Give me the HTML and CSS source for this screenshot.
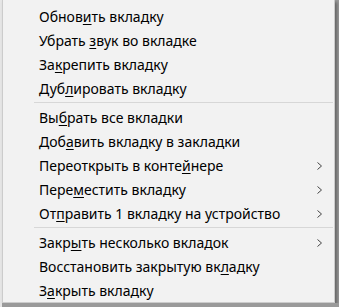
FILE: index.html
```html
<!DOCTYPE html>
<html lang="ru">
<head>
  <meta charset="UTF-8">
  <title>Контекстное меню вкладки</title>
  <link rel="stylesheet" href="styles.css">
</head>
<body>
  <div class="menu">
    <div class="item"><span>Обнов<u>и</u>ть вкладку</span></div>
    <div class="item"><span>Убрать <u>з</u>вук во вкладке</span></div>
    <div class="item"><span>За<u>к</u>репить вкладку</span></div>
    <div class="item"><span>Дуб<u>л</u>ировать вкладку</span></div>
    <div class="sep"></div>
    <div class="item"><span>Вы<u>б</u>рать все вкладки</span></div>
    <div class="item"><span>Доб<u>а</u>вить вкладку в закладки</span></div>
    <div class="item"><span>Переоткрыть в конте<u>й</u>нере</span>
      <svg class="arrow" width="6" height="8" viewBox="0 0 6 8"><polyline points="0.5,0.5 4.5,4 0.5,7.5" /></svg>
    </div>
    <div class="item"><span>Пере<u>м</u>естить вкладку</span>
      <svg class="arrow" width="6" height="8" viewBox="0 0 6 8"><polyline points="0.5,0.5 4.5,4 0.5,7.5" /></svg>
    </div>
    <div class="item"><span>От<u>п</u>равить 1 вкладку на устройство</span>
      <svg class="arrow" width="6" height="8" viewBox="0 0 6 8"><polyline points="0.5,0.5 4.5,4 0.5,7.5" /></svg>
    </div>
    <div class="sep"></div>
    <div class="item"><span>Закр<u>ы</u>ть несколько вкладок</span>
      <svg class="arrow" width="6" height="8" viewBox="0 0 6 8"><polyline points="0.5,0.5 4.5,4 0.5,7.5" /></svg>
    </div>
    <div class="item"><span>Восстановить закрытую вк<u>л</u>адку</span></div>
    <div class="item"><span>З<u>а</u>крыть вкладку</span></div>
  </div>
</body>
</html>
```

FILE: styles.css
```css
body {
  margin: 0;
  background: linear-gradient(to right, #e6e6e6 2px, #9a9a9a 2px);
  font-family: 'Noto Sans', sans-serif;
  font-size: 14px;
  color: #000;
}

.menu {
  margin-left: 2px;
  width: 333px;
  height: 303px;
  box-sizing: border-box;
  background: #f2f2f2;
  border: 1px solid #cccccc;
  border-top: none;
  padding-top: 5px;
  box-shadow: 2px 2px 3px rgba(0, 0, 0, 0.35);
}

.item {
  height: 24px;
  line-height: 24px;
  padding-left: 36px;
  padding-right: 11px;
  display: flex;
  align-items: center;
  justify-content: space-between;
  white-space: nowrap;
}

.item u {
  text-underline-offset: 2px;
}

.arrow polyline {
  fill: none;
  stroke: #444;
  stroke-width: 1;
}

.sep {
  height: 1px;
  background: #d7d7d7;
  margin: 1px 1px 3px 31px;
}
```
